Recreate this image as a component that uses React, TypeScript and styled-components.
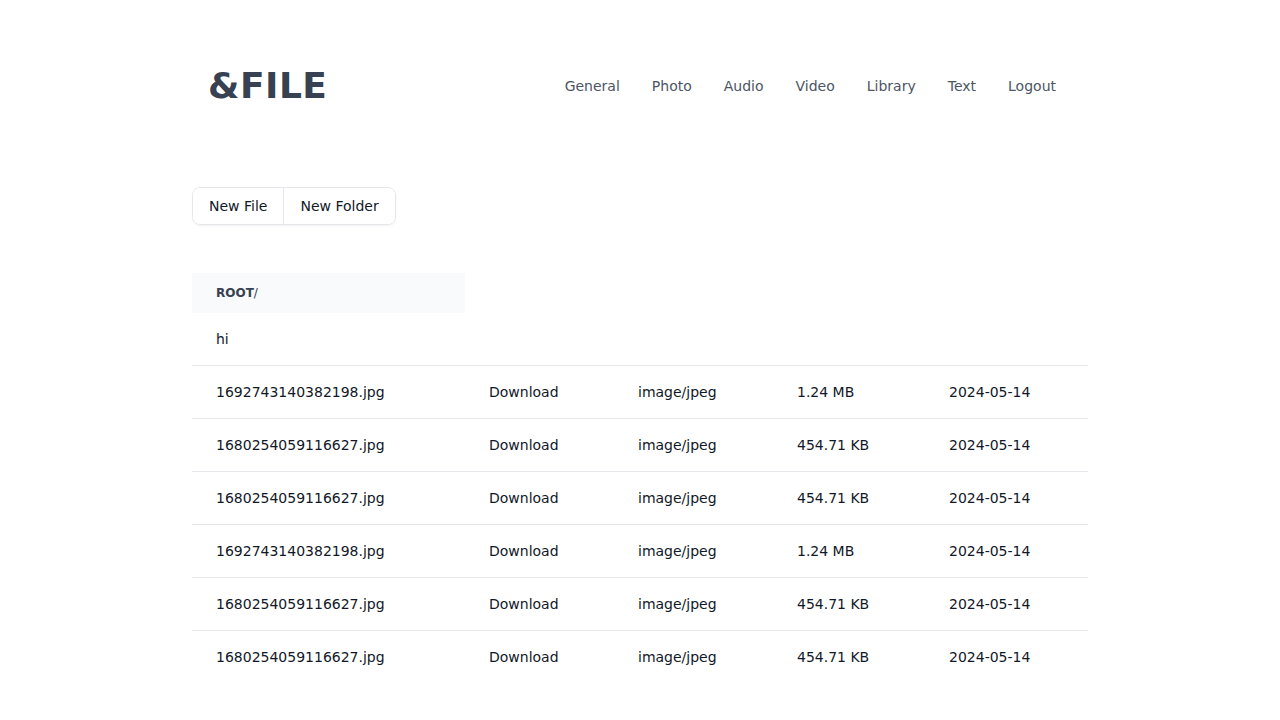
import React from "react";
import styled, { createGlobalStyle } from "styled-components";

const GlobalStyle = createGlobalStyle`
  html, body { margin: 0; padding: 0; background: #ffffff; }
  body { font-family: "DejaVu Sans", sans-serif; color: #111827; }
  * { box-sizing: border-box; }
`;

const Page = styled.div`
  width: 896px;
  margin: 0 auto;
  padding-top: 66px;
`;

const Header = styled.header`
  display: flex;
  align-items: center;
  justify-content: space-between;
  padding: 0 32px 0 16px;
  height: 40px;
`;

const Logo = styled.a`
  font-size: 36px;
  line-height: 40px;
  font-weight: 700;
  letter-spacing: 0.5px;
  color: #374151;
  text-decoration: none;
`;

const Nav = styled.nav`
  display: flex;
  align-items: center;
  gap: 32px;
`;

const NavLink = styled.a`
  font-size: 14px;
  line-height: 20px;
  color: #4b5563;
  text-decoration: none;
`;

const Toolbar = styled.div`
  display: inline-flex;
  margin-top: 81px;
  border: 1px solid #e5e7eb;
  border-radius: 8px;
  box-shadow: 0 1px 2px rgba(0, 0, 0, 0.05);
  overflow: hidden;
`;

const ToolButton = styled.button<{ $divider?: boolean }>`
  font-family: "DejaVu Sans", sans-serif;
  font-size: 14px;
  line-height: 20px;
  padding: 8px 16px;
  background: #ffffff;
  color: #111827;
  border: none;
  border-left: ${(p) => (p.$divider ? "1px solid #e5e7eb" : "none")};
  cursor: pointer;
`;

const Table = styled.table`
  margin-top: 48px;
  width: 896px;
  border-collapse: collapse;
  table-layout: fixed;
  font-size: 14px;
  line-height: 20px;
`;

const HeadCell = styled.th`
  background: #f9fafb;
  padding: 10px 24px;
  text-align: left;
  font-size: 12px;
  line-height: 20px;
  color: #374151;
  font-weight: 700;
`;

const Slash = styled.span`
  font-weight: 400;
`;

const Row = styled.tr<{ $first?: boolean }>`
  border-top: ${(p) => (p.$first ? "none" : "1px solid #e5e7eb")};
`;

const Cell = styled.td`
  padding: 16px 24px;
  color: #111827;
  white-space: nowrap;
`;

const files = [
  ["1692743140382198.jpg", "1.24 MB"],
  ["1680254059116627.jpg", "454.71 KB"],
  ["1680254059116627.jpg", "454.71 KB"],
  ["1692743140382198.jpg", "1.24 MB"],
  ["1680254059116627.jpg", "454.71 KB"],
  ["1680254059116627.jpg", "454.71 KB"],
];

const navItems = ["General", "Photo", "Audio", "Video", "Library", "Text", "Logout"];

export default function App() {
  return (
    <>
      <GlobalStyle />
      <Page>
        <Header>
          <Logo>&amp;FILE</Logo>
          <Nav>
            {navItems.map((n) => (
              <NavLink key={n}>{n}</NavLink>
            ))}
          </Nav>
        </Header>
        <Toolbar>
          <ToolButton>New File</ToolButton>
          <ToolButton $divider>New Folder</ToolButton>
        </Toolbar>
        <Table>
          <colgroup>
            <col style={{ width: 273 }} />
            <col style={{ width: 149 }} />
            <col style={{ width: 159 }} />
            <col style={{ width: 152 }} />
            <col style={{ width: 163 }} />
          </colgroup>
          <thead>
            <tr>
              <HeadCell>
                ROOT<Slash>/</Slash>
              </HeadCell>
            </tr>
          </thead>
          <tbody>
            <Row $first>
              <Cell>hi</Cell>
              <Cell />
              <Cell />
              <Cell />
              <Cell />
            </Row>
            {files.map(([name, size], i) => (
              <Row key={i}>
                <Cell>{name}</Cell>
                <Cell>Download</Cell>
                <Cell>image/jpeg</Cell>
                <Cell>{size}</Cell>
                <Cell>2024-05-14</Cell>
              </Row>
            ))}
          </tbody>
        </Table>
      </Page>
    </>
  );
}
